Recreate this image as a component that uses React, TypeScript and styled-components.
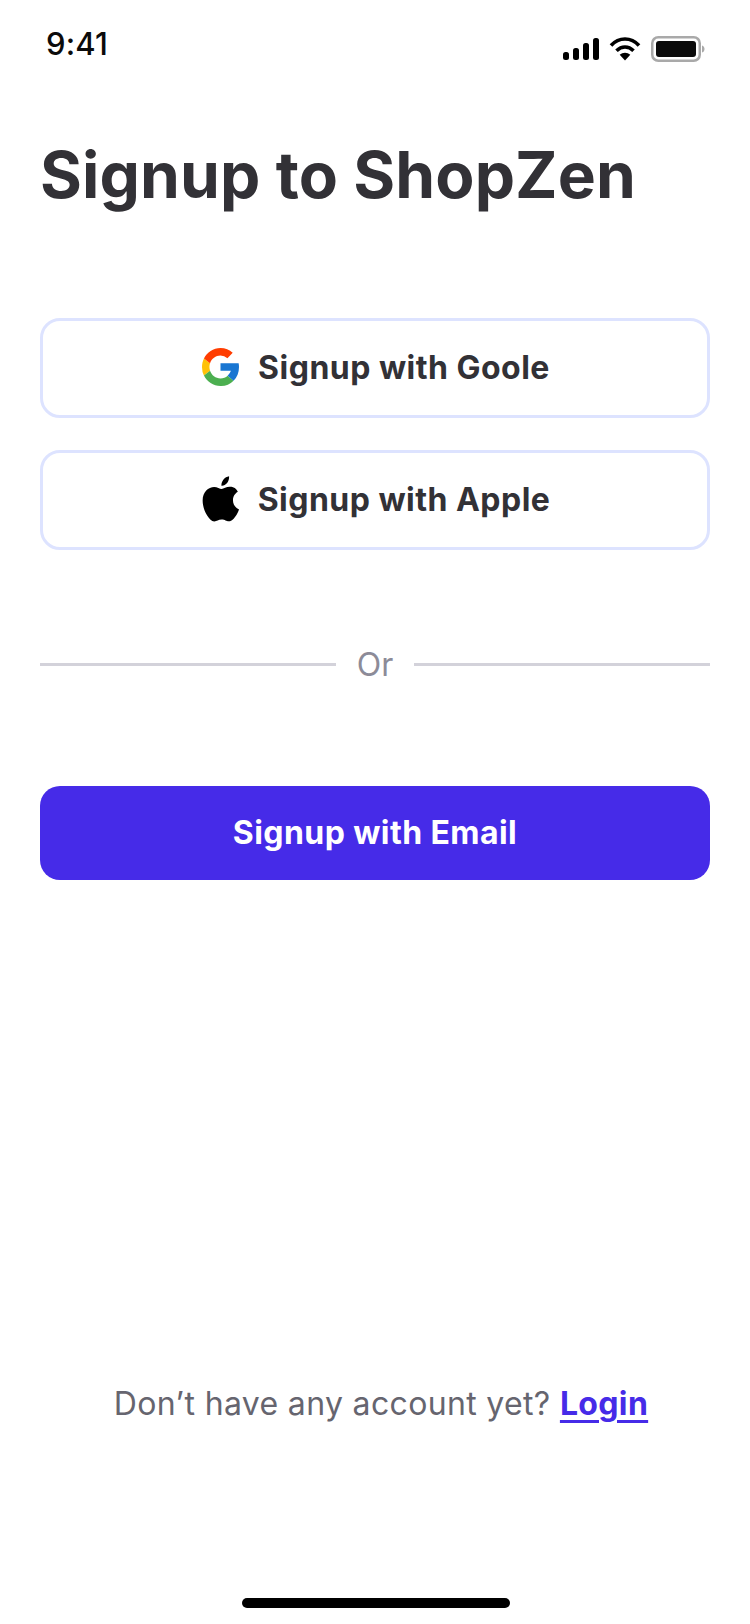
import React from "react";
import styled, { createGlobalStyle } from "styled-components";

const Global = createGlobalStyle`
  html, body { margin: 0; padding: 0; background: #fff; }
  * { box-sizing: border-box; }
`;

const Screen = styled.div`
  width: 750px;
  height: 1624px;
  background: #fff;
  display: flex;
  flex-direction: column;
  font-family: Inter, "Liberation Sans", sans-serif;
  overflow: hidden;
`;

const StatusBar = styled.div`
  height: 62px;
  padding: 25px 45px 0 46px;
  display: flex;
  justify-content: space-between;
  align-items: flex-start;
`;

const Time = styled.span`
  font-size: 31px;
  line-height: 38px;
  font-weight: 550;
  letter-spacing: 0.2px;
  color: #0b0b0b;
`;

const StatusIcons = styled.div`
  display: flex;
  align-items: center;
  gap: 10px;
  margin-top: 11px;
`;

const Main = styled.main`
  flex: 1;
  display: flex;
  flex-direction: column;
  padding: 0 40px;
`;

const Title = styled.h1`
  margin: 73px 0 0;
  font-size: 64px;
  line-height: 80px;
  font-weight: 700;
  letter-spacing: 0.12px;
  color: #323136;
`;

const Socials = styled.div`
  margin-top: 103px;
  display: flex;
  flex-direction: column;
  gap: 32px;
`;

const SocialButton = styled.button`
  height: 100px;
  width: 670px;
  border: 3px solid #dde3ff;
  border-radius: 20px;
  background: #fff;
  display: flex;
  align-items: center;
  justify-content: center;
  gap: 19px;
  font-family: inherit;
  font-size: 32px;
  font-weight: 700;
  letter-spacing: 0.48px;
  color: #323136;
  padding: 0 0 2px 2px;
`;

const Divider = styled.div`
  margin-top: 91px;
  display: flex;
  align-items: center;
  gap: 21px;
`;

const Rule = styled.span`
  flex: 1;
  height: 3px;
  background: #d3d2da;
`;

const DividerLabel = styled.span`
  font-size: 32px;
  line-height: 44px;
  padding-top: 2px;
  color: #8c8b98;
`;

const EmailButton = styled.button`
  margin-top: 99px;
  height: 94px;
  width: 670px;
  border: none;
  border-radius: 20px;
  background: #462be8;
  color: #fff;
  font-family: inherit;
  font-size: 32px;
  font-weight: 700;
  letter-spacing: 0.42px;
  padding: 0 0 2px;
`;

const Footer = styled.p`
  margin: auto 0 0;
  padding: 0 0 172px 12px;
  text-align: center;
  font-size: 32px;
  line-height: 44px;
  letter-spacing: 0.34px;
  color: #66656f;
`;

const LoginLink = styled.a`
  font-weight: 700;
  color: #462be8;
  text-decoration: underline;
  text-underline-offset: 5px;
  text-decoration-thickness: 3px;
`;

const HomeBar = styled.div`
  flex: none;
  margin: 0 0 16px 242px;
  width: 268px;
  height: 10px;
  border-radius: 5px;
  background: #000;
`;

const GoogleIcon = () => (
  <svg width="37" height="38" viewBox="4 4 40 40" preserveAspectRatio="none" aria-hidden>
    <path fill="#FFC107" d="M4 24c0-3.200.8-6.300 2.100-9l6.600 5.100a11.900 11.900 0 0 0 0 7.800L6.100 33A19.900 19.900 0 0 1 4 24z" />
    <path fill="#FF3D00" d="M6.100 15C9.400 8.500 16.200 4 24 4c5.100 0 9.700 1.900 13.200 5l-5.700 5.700A11.900 11.900 0 0 0 24 12c-5.200 0-9.700 3.400-11.300 8.100z" />
    <path fill="#4CAF50" d="M24 44c-7.800 0-14.600-4.500-17.900-11l6.600-5.100C14.300 32.600 18.800 36 24 36c3 0 5.700-1.100 7.700-2.900l6.400 5.300A19.800 19.800 0 0 1 24 44z" />
    <path fill="#1976D2" d="M43.600 20H24v8h11.300a12 12 0 0 1-3.600 5.100l6.400 5.300C41.900 35 44 30 44 24c0-1.300-.1-2.700-.4-4z" />
  </svg>
);

const AppleIcon = () => (
  <svg width="37" height="46" viewBox="0 0 814 1000" aria-hidden>
    <path fill="#000" d="M788 341c-6 4-107 61-107 188 0 147 129 199 133 200-1 3-21 71-68 141-42 61-87 122-153 122s-84-39-161-39c-75 0-102 40-163 40s-103-57-152-126C61 786 14 657 14 535c0-197 128-301 254-301 67 0 123 44 165 44 40 0 103-47 179-47 29 0 133 3 176 110zM552 150c28-35 44-85 44-135 0-6 0-11-1-15-44 6-92 34-122 70-24 29-46 76-46 122 0 8 0 14 1 18 3 1 7 1 11 1 42 0 84-26 113-61z" />
  </svg>
);

const SignalIcon = () => (
  <svg width="36" height="22" viewBox="0 0 36 22" aria-hidden>
    <rect x="0" y="14" width="6" height="8" rx="2.500" fill="#000" />
    <rect x="10" y="10" width="6" height="12" rx="2.500" fill="#000" />
    <rect x="20" y="5" width="6" height="17" rx="2.500" fill="#000" />
    <rect x="30" y="0" width="6" height="22" rx="2.500" fill="#000" />
  </svg>
);

const WifiIcon = () => (
  <svg width="32" height="24" viewBox="0 0 32 24" aria-hidden fill="none" stroke="#000" strokeWidth="3.600">
    <path d="M2 8.500C10-.2 22-.2 30 8.500" />
    <path d="M7.500 13.800c5-5 12-5 17 0" />
    <path fill="#000" stroke="none" d="M16 23.500l-5.300-5.700c3-2.800 7.600-2.800 10.600 0z" />
  </svg>
);

const BatteryIcon = () => (
  <svg width="54" height="26" viewBox="0 0 54 26" aria-hidden>
    <rect x="1.250" y="1.250" width="47.500" height="23.500" rx="6" fill="none" stroke="#a9a9a9" strokeWidth="2.500" />
    <rect x="5" y="5" width="40" height="16" rx="3" fill="#0b0b0b" />
    <path d="M51 9.500c1.800.5 2.500 2 2.500 3.500s-.7 3-2.500 3.500z" fill="#a9a9a9" />
  </svg>
);

export default function App() {
  return (
    <Screen>
      <Global />
      <StatusBar>
        <Time>9:41</Time>
        <StatusIcons>
          <SignalIcon />
          <WifiIcon />
          <BatteryIcon />
        </StatusIcons>
      </StatusBar>
      <Main>
        <Title>Signup to ShopZen</Title>
        <Socials>
          <SocialButton>
            <GoogleIcon />
            Signup with Goole
          </SocialButton>
          <SocialButton>
            <AppleIcon />
            Signup with Apple
          </SocialButton>
        </Socials>
        <Divider>
          <Rule />
          <DividerLabel>Or</DividerLabel>
          <Rule />
        </Divider>
        <EmailButton>Signup with Email</EmailButton>
        <Footer>
          Don’t have any account yet? <LoginLink href="#">Login</LoginLink>
        </Footer>
      </Main>
      <HomeBar />
    </Screen>
  );
}
